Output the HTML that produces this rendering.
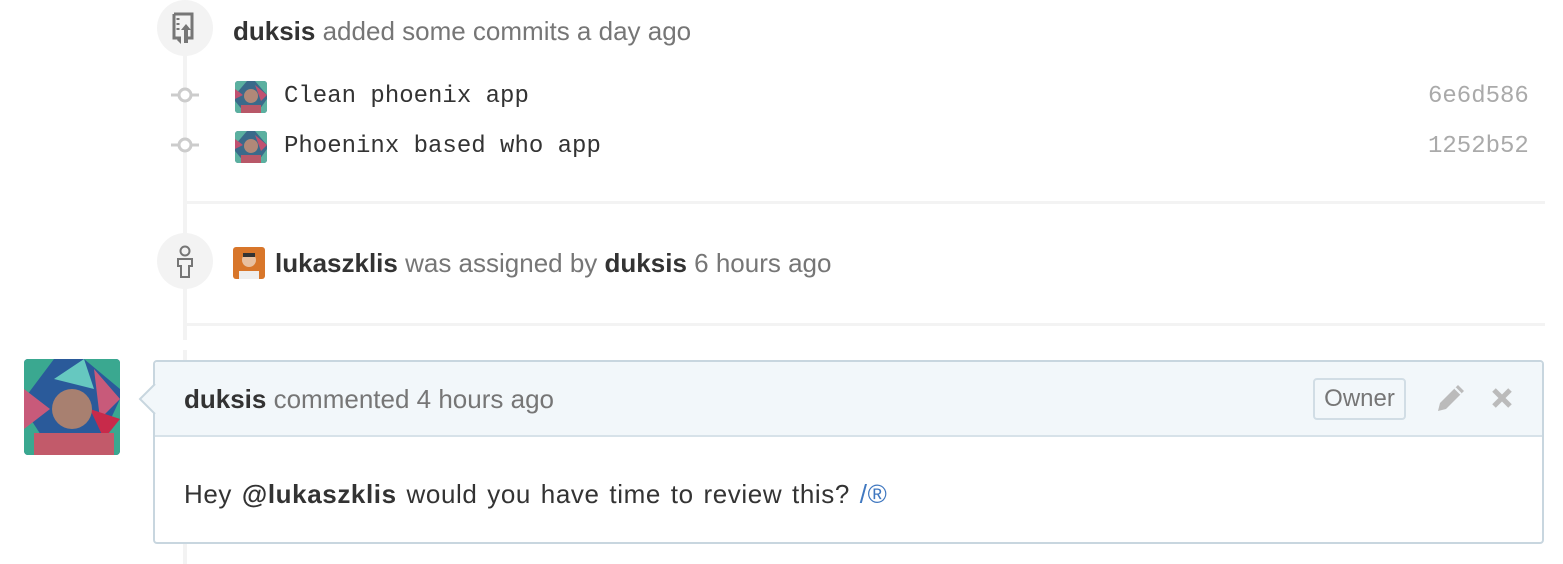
<!DOCTYPE html>
<html><head><meta charset="utf-8"><style>
*{margin:0;padding:0;box-sizing:border-box}
body{width:1563px;height:564px;background:#fff;position:relative;overflow:hidden;font-family:"Liberation Sans",Arial,sans-serif;color:#767676}
.abs{position:absolute}
.line{left:183px;width:4px;background:#f3f3f3}
.badge{width:56px;height:56px;border-radius:50%;background:#f3f3f3}
.t{font-size:26px;white-space:nowrap;line-height:30px}
b{color:#333}
.mono{font-family:"Liberation Mono",monospace;font-size:24px;color:#333;white-space:nowrap}
.sha{font-family:"Liberation Mono",monospace;font-size:24px;color:#aaa}
.sep{left:187px;width:1358px;height:3px;background:#f3f3f3}
.av{border-radius:3px;overflow:hidden}
</style></head><body>
<div class="abs line" style="top:40px;height:300px"></div>
<div class="abs line" style="top:350px;height:10px"></div>
<div class="abs line" style="top:543px;height:21px"></div>
<div class="abs badge" style="left:157px;top:0"></div>
<svg class="abs" style="left:171px;top:12px" width="28" height="36" viewBox="0 0 28 36"><path d="M3 2h18v24h-4M3 2v24h6M7 6v2M7 11v2M7 16v2" fill="none" stroke="#767676" stroke-width="3"/><path d="M15 12l-5 6h3v13h4V18h3z" fill="#767676"/><path d="M6 28l4 4v-8z" fill="#767676"/></svg>
<div class="abs t" style="left:233px;top:16px"><b>duksis</b> added some commits a day ago</div>
<svg class="abs" style="left:169px;top:85px" width="32" height="20"><line x1="2" y1="10" x2="30" y2="10" stroke="#ccc" stroke-width="3"/><circle cx="16" cy="10" r="6" fill="#fff" stroke="#ccc" stroke-width="3"/></svg>
<svg class="abs" style="left:169px;top:135px" width="32" height="20"><line x1="2" y1="10" x2="30" y2="10" stroke="#ccc" stroke-width="3"/><circle cx="16" cy="10" r="6" fill="#fff" stroke="#ccc" stroke-width="3"/></svg>
<svg class="abs av" style="left:235px;top:81px" width="32" height="32"><rect width="32" height="32" fill="#3a6a8a"/><path d="M0 0h12L0 14zM32 0v14L20 0zM0 20l10 12H0zM32 18v14H22z" fill="#5bb0a0"/><path d="M20 4l12 10-6 6zM0 8l8 6-8 4z" fill="#c05070"/><circle cx="16" cy="15" r="7" fill="#b08878"/><rect x="6" y="24" width="20" height="8" fill="#b85868"/></svg>
<svg class="abs av" style="left:235px;top:131px" width="32" height="32"><rect width="32" height="32" fill="#3a6a8a"/><path d="M0 0h12L0 14zM32 0v14L20 0zM0 20l10 12H0zM32 18v14H22z" fill="#5bb0a0"/><path d="M20 4l12 10-6 6zM0 8l8 6-8 4z" fill="#c05070"/><circle cx="16" cy="15" r="7" fill="#b08878"/><rect x="6" y="24" width="20" height="8" fill="#b85868"/></svg>
<div class="abs mono" style="left:284px;top:82px;line-height:30px">Clean phoenix app</div>
<div class="abs mono" style="left:284px;top:132px;line-height:30px">Phoeninx based who app</div>
<div class="abs sha" style="left:1428px;top:82px;line-height:30px">6e6d586</div>
<div class="abs sha" style="left:1428px;top:132px;line-height:30px">1252b52</div>
<div class="abs sep" style="top:201px"></div>
<div class="abs badge" style="left:157px;top:233px"></div>
<svg class="abs" style="left:174px;top:245px" width="22" height="34" viewBox="0 0 22 34"><circle cx="11" cy="6" r="4.5" fill="none" stroke="#767676" stroke-width="2"/><path d="M4 14h14v7h-3v11h-8V21H4z" fill="none" stroke="#767676" stroke-width="2"/></svg>
<svg class="abs av" style="left:233px;top:247px" width="32" height="32"><rect width="32" height="32" fill="#d8762a"/><circle cx="16" cy="13" r="7" fill="#e8c0a0"/><rect x="10" y="6" width="12" height="4" fill="#333"/><rect x="6" y="24" width="20" height="8" fill="#eee"/></svg>
<div class="abs t" style="left:275px;top:248px"><b>lukaszklis</b> was assigned by <b>duksis</b> 6 hours ago</div>
<div class="abs sep" style="top:323px"></div>
<svg class="abs av" style="left:24px;top:359px;border-radius:4px" width="96" height="96"><rect width="96" height="96" fill="#2a5a9a"/><path d="M0 0h30L0 40zM60 0h36v30zM0 50l30 46H0zM96 40v56H70z" fill="#3aa890"/><path d="M70 10l26 30-20 20zM0 30l26 20-26 20z" fill="#c85a7a"/><path d="M30 20l30-20 10 30z" fill="#66c8c0"/><path d="M66 50l30 10-16 20z" fill="#c82a4a"/><circle cx="48" cy="50" r="20" fill="#a88070"/><rect x="10" y="74" width="80" height="22" fill="#c25a6a"/></svg>
<div class="abs" style="left:153px;top:360px;width:1391px;height:184px;border:2px solid #c8d6df;border-radius:4px;background:#fff"></div>
<div class="abs" style="left:155px;top:362px;width:1387px;height:75px;background:#f2f7fa;border-bottom:2px solid #d7e2e9;border-radius:3px 3px 0 0"></div>
<svg class="abs" style="left:138px;top:384px" width="18" height="30"><path d="M17 0L2 15l15 15" fill="#f2f7fa" stroke="#c8d6df" stroke-width="2"/></svg>
<div class="abs t" style="left:184px;top:384px"><b>duksis</b> commented 4 hours ago</div>
<div class="abs" style="left:1313px;top:378px;width:93px;height:42px;border:2px solid #d1dde5;border-radius:4px;font-size:24px;line-height:38px;text-align:center;color:#767676">Owner</div>
<svg class="abs" style="left:1436px;top:383px" width="30" height="30" viewBox="0 0 30 30"><path d="M22 2l6 6L10 26 2 28l2-8z" fill="#bbb"/><path d="M19 5l6 6" stroke="#f2f7fa" stroke-width="2"/></svg>
<svg class="abs" style="left:1491px;top:387px" width="22" height="22"><path d="M3 3l16 16M19 3L3 19" stroke="#bbb" stroke-width="5"/></svg>
<div class="abs t" style="left:184px;top:479px;color:#333;letter-spacing:0.6px;word-spacing:2px">Hey <b>@lukaszklis</b> would you have time to review this? <span style="color:#4078c0">/®</span></div>
</body></html>
